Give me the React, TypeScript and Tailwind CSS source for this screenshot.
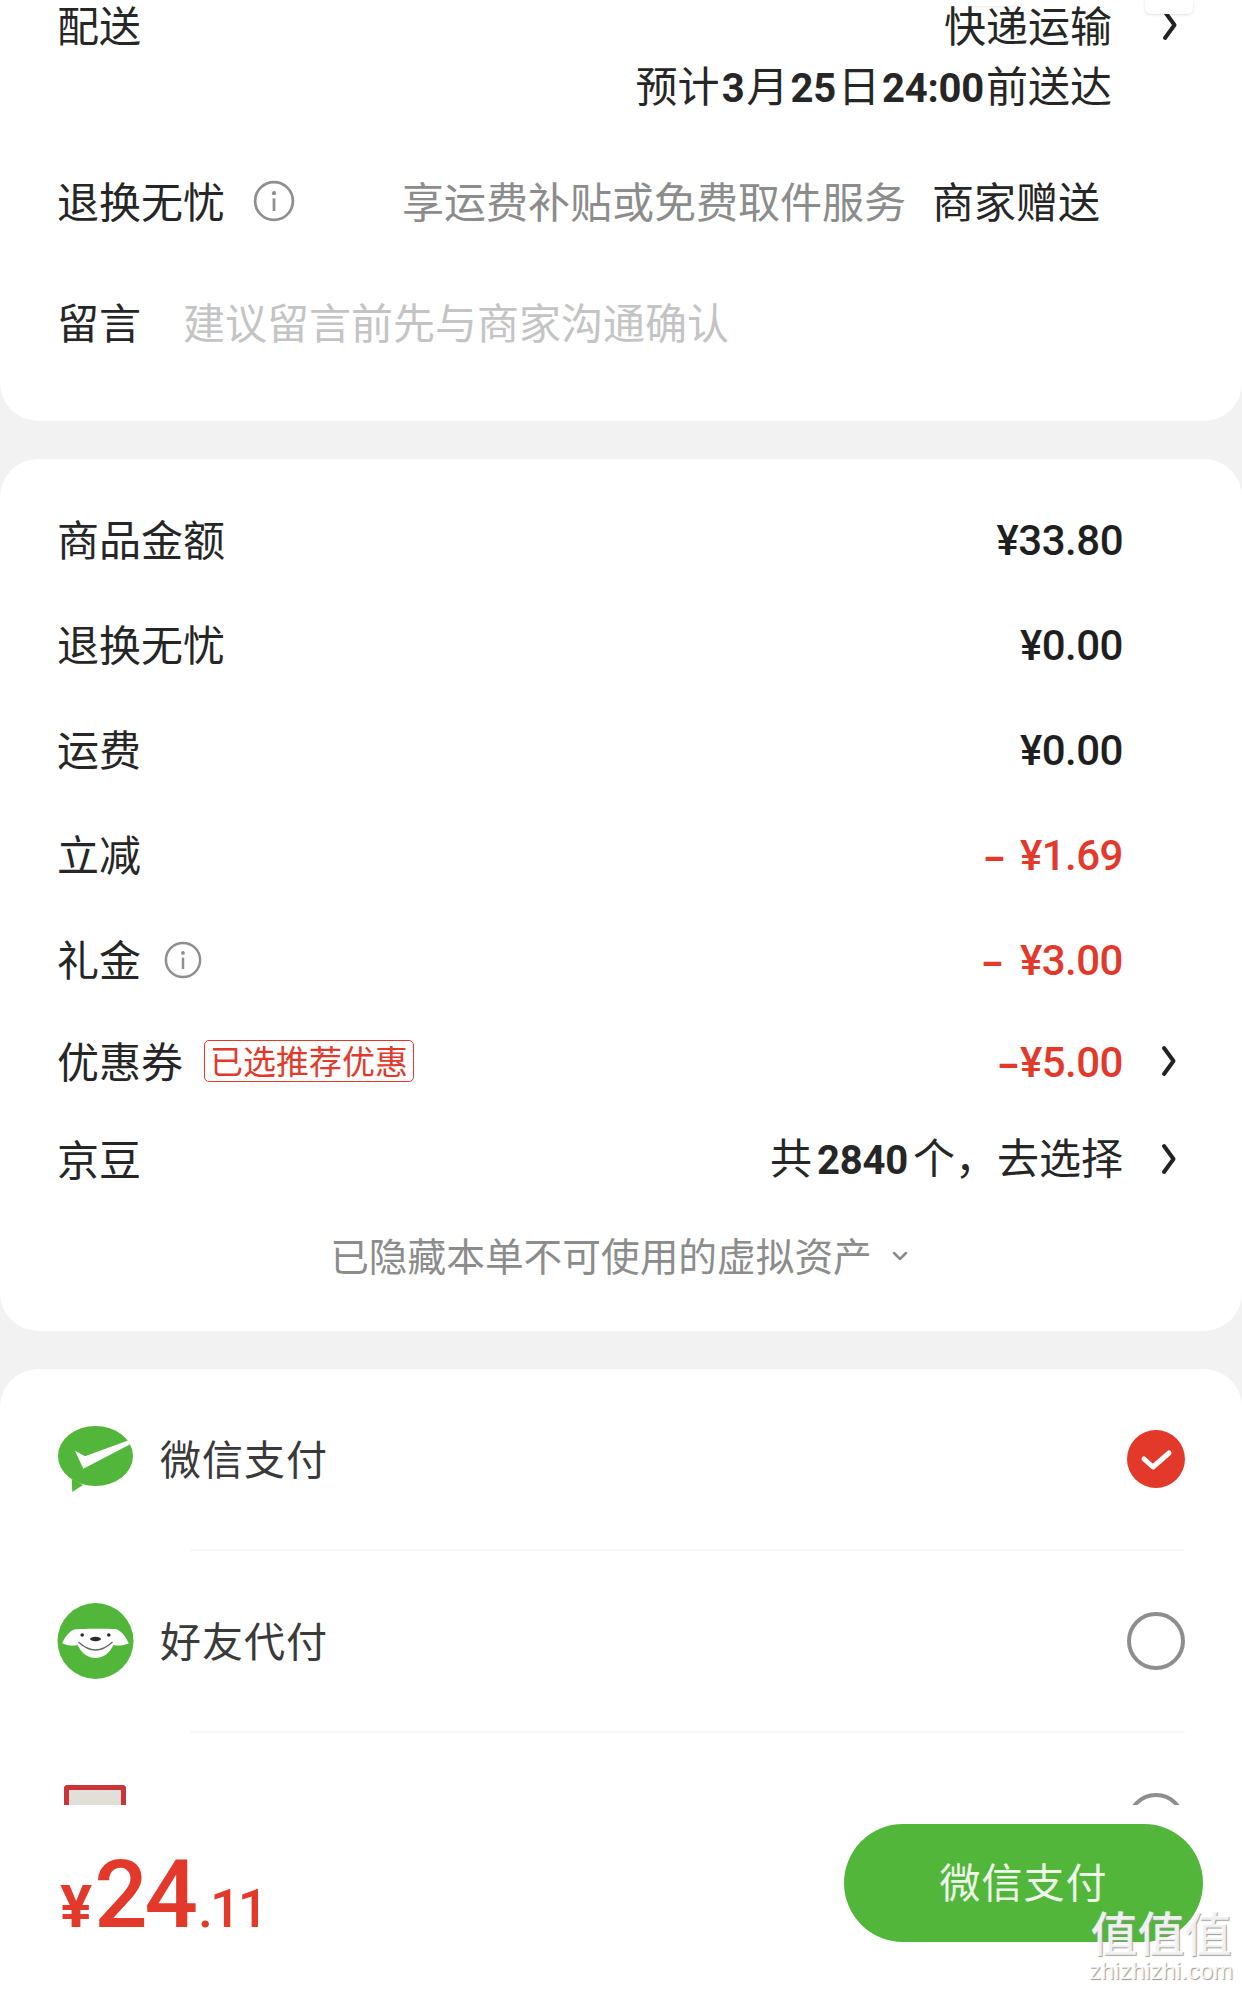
import React from 'react';
import { ChevronDown } from 'lucide-react';

const CJK = "font-['Noto_Sans_CJK_SC','Noto_Sans',sans-serif]";

const Arrow = () => (
    <svg viewBox="0 0 16 32" className="w-[16px] h-[32px]" fill="none">
        <path d="M3 3 L12.5 16 L3 29" stroke="#222" strokeWidth="4" strokeLinecap="round" strokeLinejoin="round" />
    </svg>
);

const InfoIcon: React.FC<{ size: string }> = ({ size }) => (
    <svg viewBox="0 0 40 40" className={size} fill="none">
        <circle cx="20" cy="20" r="18" stroke="#8f8f8f" strokeWidth="2.6" />
        <circle cx="20" cy="12.5" r="2" fill="#8f8f8f" />
        <path d="M20 17.5v12" stroke="#8f8f8f" strokeWidth="2.6" />
    </svg>
);

const Num: React.FC<{ children: React.ReactNode }> = ({ children }) => (
    <b className="mx-[2px] font-['Roboto',sans-serif] font-bold text-[40px] tracking-[-0.2px]">{children}</b>
);

const Money: React.FC<{ children: React.ReactNode; red?: boolean }> = ({ children, red }) => (
    <span className={`translate-y-[1px] font-['Roboto',sans-serif] font-medium text-[42px] tracking-[-0.5px] ${red ? 'text-[#e2392b]' : 'text-[#1f1f1f]'}`}>
        {children}
    </span>
);

const SummaryRow: React.FC<{ label: React.ReactNode; value: React.ReactNode; arrow?: boolean; height?: string }> = ({
    label,
    value,
    arrow,
    height = 'h-[105px]',
}) => (
    <div className={`${height} flex items-center justify-between pl-[57px] pr-[65px]`}>
        <div className="flex items-center text-[42px] text-[#262626] -mt-[4px]">{label}</div>
        <div className="flex items-center">
            {value}
            <div className="w-[54px] flex justify-end">{arrow && <Arrow />}</div>
        </div>
    </div>
);

const WechatIcon = () => (
    <svg viewBox="0 0 78 68" className="w-[78px] h-[68px]">
        <ellipse cx="38.5" cy="31" rx="37.5" ry="30" fill="#52b63a" />
        <path d="M14.7 54 L15.3 67 L26 60 Z" fill="#52b63a" />
        <path d="M18 25.7 L28 31.3 L70.3 15.7 L75.7 18 L26.3 43.7 Z" fill="#fff" />
    </svg>
);

const FriendIcon = () => (
    <svg viewBox="0 0 76 76" className="w-[77px] h-[76px]">
        <circle cx="38" cy="38" r="38" fill="#52b63a" />
        <path d="M4.7 40.3 C8 33 13 27 18 26.3 C26 25.5 50 25.5 58 26 C63 27 68 33 71.3 40.3 C66 43 60 43 56 42 C52 50 46 55 38 55 C30 55 24 50 20 42 C16 43 10 43 4.7 40.3 Z" fill="#fff" />
        <ellipse cx="38" cy="36" rx="5.5" ry="2.2" fill="#2b2b2b" />
        <circle cx="24.7" cy="32" r="1.8" fill="#2b2b2b" />
        <circle cx="51.3" cy="32" r="1.8" fill="#2b2b2b" />
        <path d="M21 39 Q38 55 55 39" stroke="#666" strokeWidth="1.2" fill="none" />
    </svg>
);

const PayRow: React.FC<{ icon: React.ReactNode; name: string; radio: React.ReactNode }> = ({ icon, name, radio }) => (
    <div className="h-[180px] flex items-center pl-[57px] pr-[57px]">
        <div className="w-[103px] flex items-center">{icon}</div>
        <span className="flex-1 text-[41px] tracking-[1px] text-[#3a3a3a] -mt-[2px]">{name}</span>
        {radio}
    </div>
);

export default function App() {
    return (
        <div className={`relative w-[1242px] h-[1990px] overflow-hidden bg-[#f2f2f2] flex flex-col ${CJK}`}>
            <div className="flex-1 min-h-0 overflow-hidden">
                {/* 配送信息 */}
                <div className="relative bg-white rounded-b-[38px] h-[421px] pl-[57px] pr-[64px] flex flex-col">
                    <div className="flex justify-between items-center h-[50px]">
                        <span className="text-[42px] text-[#262626] leading-[50px] -mt-[3px]">配送</span>
                        <div className="flex items-center">
                            <span className="text-[42px] text-[#262626] leading-[50px] -mt-[3px]">快递运输</span>
                            <div className="w-[66px] flex justify-end"><Arrow /></div>
                        </div>
                    </div>
                    <div className="flex justify-end pr-[66px] mt-[12px] h-[50px]">
                        <span className="text-[42px] text-[#262626] leading-[50px] -mt-[3px]">
                            预计<Num>3</Num>月<Num>25</Num>日<Num>24:00</Num>前送达
                        </span>
                    </div>
                    <div className="flex items-center mt-[65px] h-[50px] -translate-y-[3px]">
                        <span className="text-[42px] text-[#262626]">退换无忧</span>
                        <InfoIcon size="w-[42px] h-[42px] ml-[28px] mt-[3px]" />
                        <span className="ml-[107px] text-[42px] text-[#8c8c8c]">享运费补贴或免费取件服务</span>
                        <span className="ml-[26px] text-[42px] text-[#262626]">商家赠送</span>
                    </div>
                    <div className="flex items-center mt-[71px] h-[50px] -translate-y-[3px]">
                        <span className="text-[42px] text-[#262626]">留言</span>
                        <span className="ml-[42px] text-[42px] text-[#c4c4c4]">建议留言前先与商家沟通确认</span>
                    </div>
                    {/* 顶部露出的悬浮块 */}
                    <div className="absolute top-0 right-[49px] w-[48px] h-[14px] bg-white rounded-b-[6px] shadow-[0_1px_3px_rgba(0,0,0,0.12)]" />
                    <div className="absolute top-0 right-[226px] w-[48px] h-[6px] bg-white rounded-b-[6px] shadow-[0_1px_3px_rgba(0,0,0,0.1)]" />
                </div>

                {/* 金额明细 */}
                <div className="mt-[38px] bg-white rounded-[38px] h-[872px] pt-[28px]">
                    <SummaryRow label="商品金额" value={<Money>¥33.80</Money>} />
                    <SummaryRow label="退换无忧" value={<Money>¥0.00</Money>} />
                    <SummaryRow label="运费" value={<Money>¥0.00</Money>} />
                    <SummaryRow
                        label="立减"
                        value={<Money red><span className="text-[34px] font-black mr-[16px]">–</span>¥1.69</Money>}
                    />
                    <SummaryRow
                        label={<>礼金<InfoIcon size="w-[38px] h-[38px] ml-[23px] mt-[4px]" /></>}
                        value={<Money red><span className="text-[34px] font-black mr-[18px]">–</span>¥3.00</Money>}
                    />
                    <SummaryRow
                        height="h-[98px]"
                        label={
                            <>
                                优惠券
                                <span className="ml-[21px] w-[210px] h-[42px] flex items-center justify-center border-[1.5px] border-[#e2392b] rounded-[5px] text-[33px] text-[#e2392b] mt-[4px]">已选推荐优惠</span>
                            </>
                        }
                        value={<Money red><span className="text-[34px] font-black mr-[2px]">–</span>¥5.00</Money>}
                        arrow
                    />
                    <SummaryRow
                        height="h-[98px]"
                        label="京豆"
                        value={
                            <span className="text-[42px] text-[#262626] -mt-[3px]">
                                共<span className="mx-[3px]"><Num>2840</Num></span>个，去选择
                            </span>
                        }
                        arrow
                    />
                    <div className="h-[96px] flex items-center justify-center text-[38.7px] text-[#8c8c8c]">
                        <span className="-mt-[4px]">已隐藏本单不可使用的虚拟资产</span>
                        <ChevronDown className="ml-[16px] w-[24px] h-[24px] text-[#8c8c8c]" strokeWidth={2.5} />
                    </div>
                </div>

                {/* 支付方式 */}
                <div className="mt-[38px] bg-white rounded-t-[38px]">
                    <PayRow
                        icon={<WechatIcon />}
                        name="微信支付"
                        radio={
                            <svg viewBox="0 0 58 58" className="w-[58px] h-[58px]">
                                <circle cx="29" cy="29" r="29" fill="#e2392b" />
                                <path d="M17 29 L26 37 L42 23" stroke="#fff" strokeWidth="5" fill="none" strokeLinecap="round" strokeLinejoin="round" />
                            </svg>
                        }
                    />
                    <div className="ml-[190px] mr-[57px] h-[2px] bg-[#f8f8f8]" />
                    <PayRow
                        icon={<FriendIcon />}
                        name="好友代付"
                        radio={<div className="w-[58px] h-[58px] rounded-full border-[4px] border-[#8e8e8e]" />}
                    />
                    <div className="ml-[190px] mr-[57px] h-[2px] bg-[#f8f8f8]" />
                    <div className="h-[80px] pl-[64px] pr-[57px] pt-[52px] flex justify-between">
                        <div className="w-[62px] h-[40px] rounded-t-[4px] border-[5px] border-b-0 border-[#c9353a] bg-[#e2dfd8]" />
                        <div className="w-[58px] h-[58px] mt-[8px] rounded-full border-[4px] border-[#8e8e8e]" />
                    </div>
                </div>
            </div>

            {/* 底部结算栏 */}
            <div className="relative h-[185px] shrink-0 bg-white flex items-center justify-between pl-[60px] pr-[39px]">
                <div className="flex items-baseline text-[#e2392b] font-['Roboto',sans-serif] font-medium -mt-[6px]">
                    <span className="text-[60px] font-bold leading-none">¥</span>
                    <span className="ml-[2px] text-[94px] leading-none tracking-[-3px]">24</span>
                    <span className="ml-[3px] text-[54px] leading-none tracking-[-3px]">.11</span>
                </div>
                <button className={`w-[359px] h-[118px] -mt-[30px] pb-[3px] rounded-full bg-[#52b63a] text-[41px] text-[#eef8ea] tracking-[1px] ${CJK}`}>
                    微信支付
                </button>
                <div className="absolute right-[9px] bottom-[6px] flex flex-col items-center text-white/85 [text-shadow:1px_1px_1px_#9a9a9a]">
                    <span className="text-[47px] font-medium leading-[54px]">值值值</span>
                    <span className="font-['Liberation_Sans',sans-serif] text-[24px] leading-[26px]">zhizhizhi.com</span>
                </div>
            </div>
        </div>
    );
}
